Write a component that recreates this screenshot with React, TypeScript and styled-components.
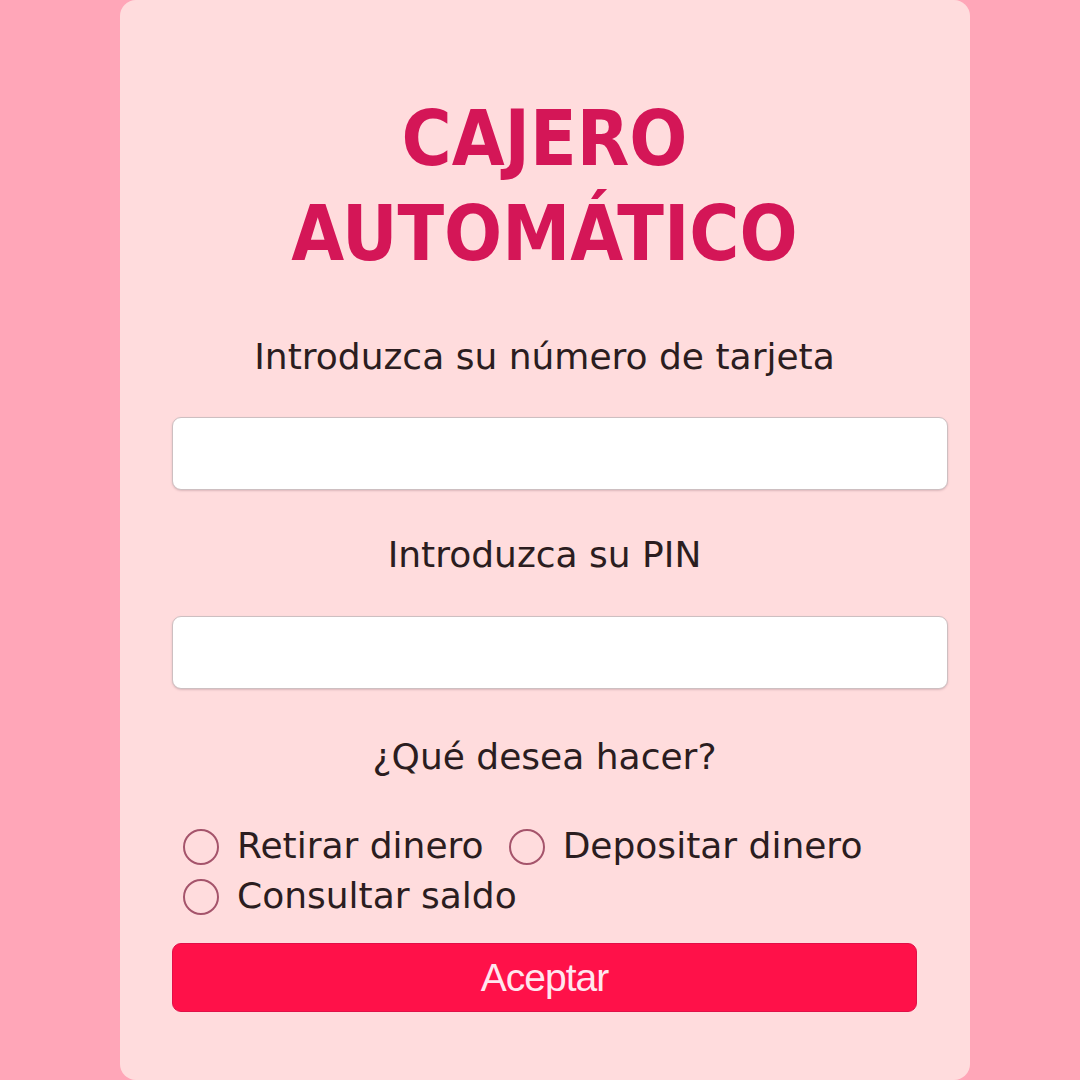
import React from "react";
import styled, { createGlobalStyle } from "styled-components";

const Global = createGlobalStyle`
  html, body { margin: 0; padding: 0; }
  body {
    background: #ffa6b8;
    font-family: "DejaVu Sans", sans-serif;
    overflow: hidden;
  }
`;

const Page = styled.div`
  width: 1080px;
  height: 1080px;
  display: flex;
  padding-left: 120px;
  box-sizing: border-box;
`;

const Card = styled.form`
  width: 850px;
  height: 1080px;
  box-sizing: border-box;
  background: #ffdcdd;
  border-radius: 16px;
  padding: 91px 53px 0 52px;
  display: flex;
  flex-direction: column;
`;

const Title = styled.h1`
  margin: 0 0 54px;
  text-align: center;
  font-family: "DejaVu Sans Condensed", "DejaVu Sans", sans-serif;
  font-weight: bold;
  font-size: 76px;
  line-height: 95px;
  color: #d41657;
`;

const Label = styled.label<{ $after?: number }>`
  display: block;
  text-align: center;
  font-family: "DejaVu Sans", sans-serif;
  font-size: 36px;
  line-height: 44px;
  color: #2b1d20;
  margin-bottom: ${(p) => (p.$after ?? 38)}px;
`;

const TextInput = styled.input<{ $after: number }>`
  display: block;
  width: calc(100% + 31px);
  height: 73px;
  box-sizing: border-box;
  margin: 0 0 ${(p) => p.$after}px;
  background: #fff;
  border: 1px solid #cdbfc1;
  border-radius: 9px;
  box-shadow: 0 1px 2px rgba(120, 80, 90, 0.25);
  outline: none;
`;

const Options = styled.div`
  display: flex;
  flex-wrap: wrap;
  margin-top: 42px;
  column-gap: 14px;
`;

const Option = styled.label`
  display: flex;
  align-items: center;
  font-family: "DejaVu Sans", sans-serif;
  font-size: 36px;
  line-height: 50px;
  height: 50px;
  color: #2b1d20;
`;

const Radio = styled.input`
  appearance: none;
  width: 36px;
  height: 36px;
  margin: 0 18px 0 11px;
  border: 2px solid #a5546b;
  border-radius: 50%;
  box-sizing: border-box;
  background: transparent;
  position: relative;
  top: 1px;
`;

const Button = styled.button`
  margin-top: 22px;
  width: 745px;
  height: 69px;
  border: 1px solid #e01048;
  border-radius: 9px;
  background: #ff1149;
  color: #ffe6ee;
  font-family: "Liberation Sans", Arial, sans-serif;
  font-size: 39px;
  letter-spacing: -1px;
  padding: 0;
`;

export default function App() {
  return (
    <>
      <Global />
      <Page>
        <Card onSubmit={(e) => e.preventDefault()}>
          <Title>
            CAJERO
            <br />
            AUTOMÁTICO
          </Title>
          <Label>Introduzca su número de tarjeta</Label>
          <TextInput type="text" $after={43} />
          <Label $after={39}>Introduzca su PIN</Label>
          <TextInput type="password" $after={46} />
          <Label as="div" $after={0}>¿Qué desea hacer?</Label>
          <Options>
            <Option>
              <Radio type="radio" name="op" />
              Retirar dinero
            </Option>
            <Option>
              <Radio type="radio" name="op" />
              Depositar dinero
            </Option>
            <Option>
              <Radio type="radio" name="op" />
              Consultar saldo
            </Option>
          </Options>
          <Button type="submit">Aceptar</Button>
        </Card>
      </Page>
    </>
  );
}
